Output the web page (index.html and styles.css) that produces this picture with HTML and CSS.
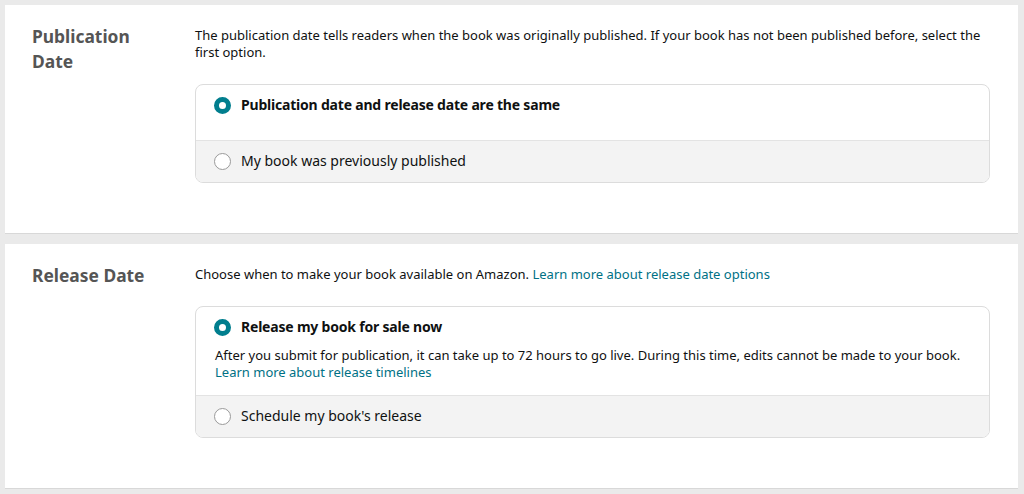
FILE: index.html
```html
<!DOCTYPE html>
<html lang="en">
<head>
<meta charset="utf-8">
<title>Publication and Release Date</title>
<link rel="stylesheet" href="styles.css">
</head>
<body>
<section class="card">
  <h2 class="heading">Publication<br>Date</h2>
  <div class="content">
    <p class="desc">The publication date tells readers when the book was originally published. If your book has not been published before, select the first option.</p>
    <div class="box">
      <div class="opt opt-selected pub-first">
        <span class="radio checked"></span>
        <span class="label bold">Publication date and release date are the same</span>
      </div>
      <div class="opt opt-other">
        <span class="radio"></span>
        <span class="label">My book was previously published</span>
      </div>
    </div>
  </div>
</section>
<section class="card">
  <h2 class="heading">Release Date</h2>
  <div class="content">
    <p class="desc">Choose when to make your book available on Amazon. <a class="link" href="#">Learn more about release date options</a></p>
    <div class="box">
      <div class="opt opt-selected rel-first">
        <div class="opt-line">
          <span class="radio checked"></span>
          <span class="label bold">Release my book for sale now</span>
        </div>
        <p class="opt-desc">After you submit for publication, it can take up to 72 hours to go live. During this time, edits cannot be made to your book.<br><a class="link" href="#">Learn more about release timelines</a></p>
      </div>
      <div class="opt opt-other">
        <span class="radio"></span>
        <span class="label">Schedule my book's release</span>
      </div>
    </div>
  </div>
</section>
</body>
</html>
```
FILE: styles.css
```css
* { box-sizing: border-box; }
html, body { margin: 0; padding: 0; }
body {
  background: #eaeaea;
  font-family: "Noto Sans", "Open Sans", Arial, sans-serif;
  color: #0f1111;
  padding: 5px 6px 0 5px;
}
.card {
  background: #fff;
  border-bottom: 1px solid #d8d8d8;
  display: grid;
  grid-template-columns: 163px 1fr;
  padding: 20px 28px 50px 27px;
  margin-bottom: 10px;
}
.heading {
  margin: 0;
  font-size: 17.4px;
  line-height: 25px;
  font-weight: 700;
  color: #555;
  margin-top: -1px;
}
.content { min-width: 0; }
.desc {
  margin: 0;
  font-size: 13px;
  line-height: 17px;
  padding-top: 2px;
}
.link { color: #007185; text-decoration: none; }
.box {
  margin-top: 23px;
  border: 1px solid #dcdcdc;
  border-radius: 8px;
  overflow: hidden;
}
.opt {
  display: flex;
  align-items: center;
  gap: 10px;
  padding: 10px 18px 11px;
  font-size: 14px;
  line-height: 20px;
}
.pub-first { padding-bottom: 25px; }
.rel-first {
  display: block;
  padding: 10px 18px 14px 18px;
}
.opt-line { display: flex; align-items: center; gap: 10px; }
.opt-other {
  background: #f3f3f3;
  border-top: 1px solid #e3e3e3;
}
.radio {
  width: 17px;
  height: 17px;
  flex: none;
  border-radius: 50%;
  border: 1px solid #9a9a9a;
  background: #fff;
}
.radio.checked {
  border: 5px solid #017e8e;
  background: #fff;
}
.label { color: #0f1111; }
.bold { font-weight: 700; letter-spacing: -0.2px; }
.opt-desc {
  margin: 10px 0 0 1px;
  font-size: 13px;
  line-height: 17px;
}
```
